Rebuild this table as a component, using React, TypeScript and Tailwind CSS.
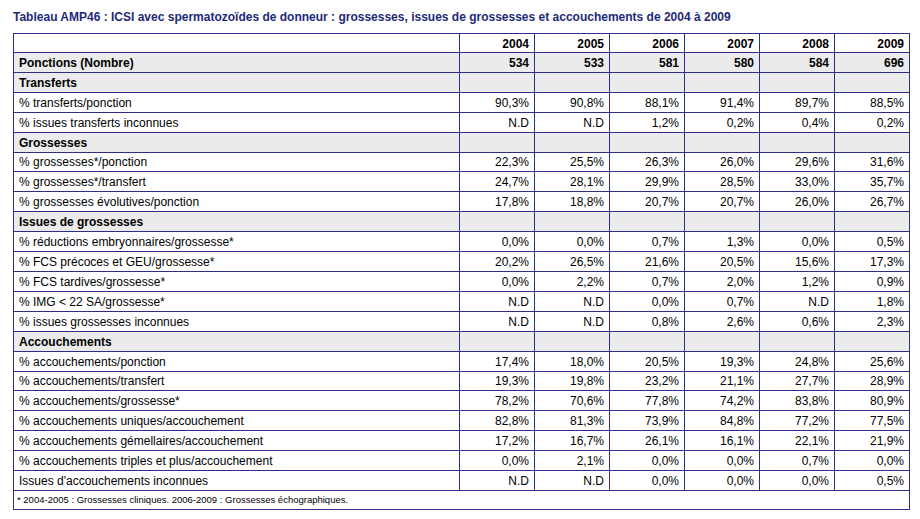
const years = ['2004', '2005', '2006', '2007', '2008', '2009'];

type Row =
  | { kind: 'total'; label: string; values: string[] }
  | { kind: 'section'; label: string }
  | { kind: 'data'; label: string; values: string[] };

const rows: Row[] = [
  { kind: 'total', label: 'Ponctions (Nombre)', values: ['534', '533', '581', '580', '584', '696'] },
  { kind: 'section', label: 'Transferts' },
  { kind: 'data', label: '% transferts/ponction', values: ['90,3%', '90,8%', '88,1%', '91,4%', '89,7%', '88,5%'] },
  { kind: 'data', label: '% issues transferts inconnues', values: ['N.D', 'N.D', '1,2%', '0,2%', '0,4%', '0,2%'] },
  { kind: 'section', label: 'Grossesses' },
  { kind: 'data', label: '% grossesses*/ponction', values: ['22,3%', '25,5%', '26,3%', '26,0%', '29,6%', '31,6%'] },
  { kind: 'data', label: '% grossesses*/transfert', values: ['24,7%', '28,1%', '29,9%', '28,5%', '33,0%', '35,7%'] },
  { kind: 'data', label: '% grossesses évolutives/ponction', values: ['17,8%', '18,8%', '20,7%', '20,7%', '26,0%', '26,7%'] },
  { kind: 'section', label: 'Issues de grossesses' },
  { kind: 'data', label: '% réductions embryonnaires/grossesse*', values: ['0,0%', '0,0%', '0,7%', '1,3%', '0,0%', '0,5%'] },
  { kind: 'data', label: '% FCS précoces et GEU/grossesse*', values: ['20,2%', '26,5%', '21,6%', '20,5%', '15,6%', '17,3%'] },
  { kind: 'data', label: '% FCS tardives/grossesse*', values: ['0,0%', '2,2%', '0,7%', '2,0%', '1,2%', '0,9%'] },
  { kind: 'data', label: '% IMG < 22 SA/grossesse*', values: ['N.D', 'N.D', '0,0%', '0,7%', 'N.D', '1,8%'] },
  { kind: 'data', label: '% issues grossesses inconnues', values: ['N.D', 'N.D', '0,8%', '2,6%', '0,6%', '2,3%'] },
  { kind: 'section', label: 'Accouchements' },
  { kind: 'data', label: '% accouchements/ponction', values: ['17,4%', '18,0%', '20,5%', '19,3%', '24,8%', '25,6%'] },
  { kind: 'data', label: '% accouchements/transfert', values: ['19,3%', '19,8%', '23,2%', '21,1%', '27,7%', '28,9%'] },
  { kind: 'data', label: '% accouchements/grossesse*', values: ['78,2%', '70,6%', '77,8%', '74,2%', '83,8%', '80,9%'] },
  { kind: 'data', label: '% accouchements uniques/accouchement', values: ['82,8%', '81,3%', '73,9%', '84,8%', '77,2%', '77,5%'] },
  { kind: 'data', label: '% accouchements gémellaires/accouchement', values: ['17,2%', '16,7%', '26,1%', '16,1%', '22,1%', '21,9%'] },
  { kind: 'data', label: '% accouchements triples et plus/accouchement', values: ['0,0%', '2,1%', '0,0%', '0,0%', '0,7%', '0,0%'] },
  { kind: 'data', label: "Issues d'accouchements inconnues", values: ['N.D', 'N.D', '0,0%', '0,0%', '0,0%', '0,5%'] },
];

const cell = 'border-r border-b border-[#2e2e8a] flex items-center';

export default function App() {
  return (
    <div className="w-[920px] h-[519px] bg-white pl-[13px] pt-[10px] font-['Liberation_Sans',Arial,sans-serif] text-black">
      <div className="text-[12px] leading-[14px] font-bold text-[#1e2a78]">
        Tableau AMP46 : ICSI avec spermatozoïdes de donneur : grossesses, issues de grossesses et accouchements de 2004 à 2009
      </div>

      <div className="mt-[9px] w-[897px] grid grid-cols-[446px_repeat(6,75px)] grid-rows-[19px_repeat(22,19.909px)_19px] border-l border-t border-[#2e2e8a] text-[12px] leading-[14px]">
        {/* Header - years */}
        <div className={cell}></div>
        {years.map((y) => (
          <div key={y} className={`${cell} justify-end pr-[5px] pt-[1px] font-bold`}>
            {y}
          </div>
        ))}

        {rows.map((row, i) => {
          if (row.kind === 'section') {
            return (
              <div key={i} className="contents">
                <div className={`${cell} bg-[#ebebeb] pl-[5px] pt-[1px] font-bold`}>{row.label}</div>
                {years.map((y) => (
                  <div key={y} className={`${cell} bg-[#ebebeb]`}></div>
                ))}
              </div>
            );
          }
          const isTotal = row.kind === 'total';
          return (
            <div key={i} className="contents">
              <div className={`${cell} pl-[5px] pt-[1px] ${isTotal ? 'bg-[#ebebeb] font-bold' : ''}`}>{row.label}</div>
              {row.values.map((v, j) => (
                <div key={j} className={`${cell} justify-end pr-[5px] pt-[1px] ${isTotal ? 'bg-[#ebebeb] font-bold' : ''}`}>
                  {v}
                </div>
              ))}
            </div>
          );
        })}

        {/* Footnote */}
        <div className={`${cell} col-span-7 pl-[3px] text-[9.5px] leading-[11px]`}>
          * 2004-2005 : Grossesses cliniques. 2006-2009 : Grossesses échographiques.
        </div>
      </div>
    </div>
  );
}
